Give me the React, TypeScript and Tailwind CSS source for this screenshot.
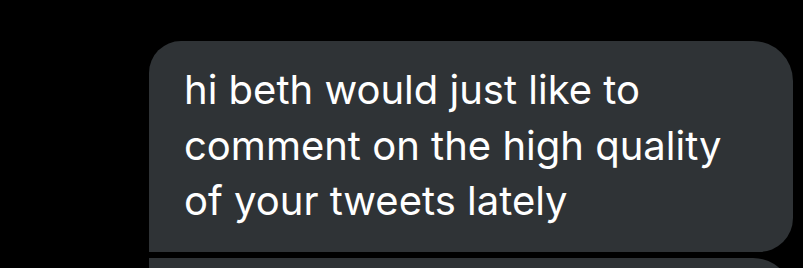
import React from "react";

const font = { fontFamily: "Inter, 'Noto Sans', sans-serif" };

export default function App() {
  return (
    <div className="w-[803px] h-[268px] overflow-hidden bg-black flex flex-col items-end pt-[41px] pr-[10px] gap-[6px]">
      <div
        className="w-[644px] h-[211px] shrink-0 bg-[#2f3336] rounded-tl-[32px] rounded-tr-[40px] rounded-br-[34px] rounded-bl-none pl-[35px] pt-[21px] text-white text-[40px] leading-[55.5px]"
        style={font}
      >
        hi beth would just like to
        <br />
        comment on the high quality
        <br />
        of your tweets lately
      </div>
      <div className="w-[644px] h-[80px] bg-[#2f3336] rounded-tr-[40px] shrink-0" />
    </div>
  );
}
